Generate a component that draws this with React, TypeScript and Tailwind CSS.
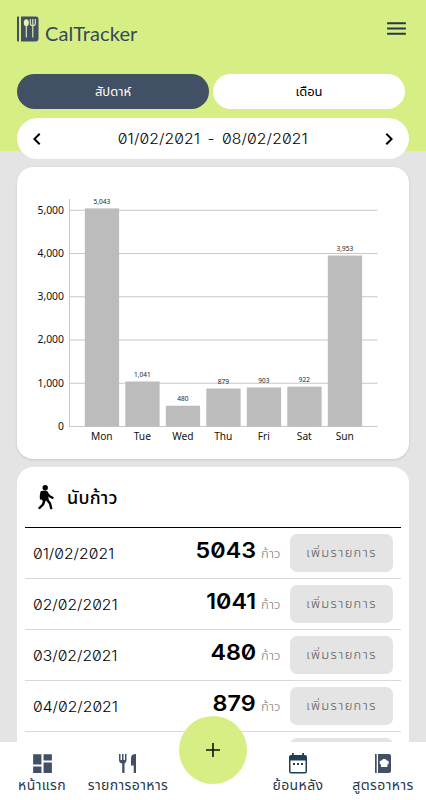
import type { ReactNode } from 'react';
import { MdChevronLeft, MdChevronRight, MdDashboard, MdMenu } from 'react-icons/md';

const days = [
  { day: 'Mon', steps: 5043 },
  { day: 'Tue', steps: 1041 },
  { day: 'Wed', steps: 480 },
  { day: 'Thu', steps: 879 },
  { day: 'Fri', steps: 903 },
  { day: 'Sat', steps: 922 },
  { day: 'Sun', steps: 3953 },
];

const rows = [
  { date: '01/02/2021', steps: 5043 },
  { date: '02/02/2021', steps: 1041 },
  { date: '03/02/2021', steps: 480 },
  { date: '04/02/2021', steps: 879 },
];

function Logo() {
  return (
    <svg width="22" height="26" viewBox="0 0 22 26">
      <path fill="#415064" d="M0 1.500Q0 .5 1 .5H2V25.500H1Q0 25.500 0 24.500ZM4 .5H19Q21.500 .5 21.500 3V22.500Q21.500 25.500 18.500 25.500H4Z" />
      <ellipse cx="9.300" cy="6.800" rx="2.500" ry="3.500" fill="#e6f5b0" />
      <path d="M9.300 8V21.500M15.800 10V21.500M13.300 3V7.500Q13.300 9.700 15.800 9.700Q18.300 9.700 18.300 7.500V3M15.800 3V9" fill="none" stroke="#e6f5b0" strokeWidth="1.100" />
    </svg>
  );
}

function WalkIcon() {
  return (
    <svg width="16" height="25" viewBox="0 0 16 25">
      <circle cx="7.200" cy="2.700" r="2.700" />
      <path d="M3.500 7L7.500 6.500L9.300 7.300L9.700 14.500L5 15Z" stroke="black" strokeWidth="1.800" strokeLinejoin="round" />
      <path d="M3.500 8L3 10.500V13.500M9.500 9L12 11.500L14.500 12.800M6.500 15L5 19.500L1.500 23M9 14.500L12 18.500L13.200 23.200" fill="none" stroke="black" strokeWidth="2.400" strokeLinecap="round" strokeLinejoin="round" />
    </svg>
  );
}

function StepsChart() {
  const y = (v: number) => 259.5 - v * 0.04325;
  return (
    <svg width="392" height="292" viewBox="0 0 392 292" className="block" fontFamily="'Noto Sans', sans-serif">
      {[0, 1000, 2000, 3000, 4000, 5000].map((v) => (
        <g key={v}>
          <path d={`M53 ${y(v)}H360.500`} stroke="#c8c8c8" />
          <text x="47" y={y(v) + 3.3} fontSize="10.400" textAnchor="end" fill="#111">{v.toLocaleString('en-US')}</text>
        </g>
      ))}
      <path d="M52.500 32V260" stroke="#c8c8c8" />
      {days.map((d, i) => {
        const cx = 84.8 + i * 40.5;
        return (
          <g key={d.day}>
            <rect x={cx - 17} y={y(d.steps)} width="34.300" height={y(0) - y(d.steps)} fill="#bcbcbc" />
            <text x={cx} y={y(d.steps) - 4.5} fontSize="6.500" textAnchor="middle" fill="#222">{d.steps.toLocaleString('en-US')}</text>
            <text x={cx} y="273.200" fontSize="10.200" textAnchor="middle" fill="#111">{d.day}</text>
          </g>
        );
      })}
    </svg>
  );
}

function CutleryIcon() {
  return (
    <svg width="18" height="19" viewBox="0 0 18 19">
      <path fill="#415064" d="M0 0H1.500V6H3V0H4.500V6H6V0H7.500V6Q7.500 9 5.500 9.500V19H3.200V9.500Q0 9 0 6ZM17 0V19H14.700V11.500H12V4Q12 0 17 0Z" />
    </svg>
  );
}

function CalendarIcon() {
  return (
    <svg width="20" height="21" viewBox="0 0 20 21">
      <path fill="#233d55" fillRule="evenodd" d="M4 0H5.800V2H14.200V0H16V2H17Q19 2 19 4V18.500Q19 20.500 17 20.500H3Q1 20.500 1 18.500V4Q1 2 3 2H4ZM2.500 7.500V19H17.500V7.500Z" />
      <path fill="#233d55" d="M5 10H7V12H5ZM9 10H11V12H9ZM13 10H15V12H13Z" />
    </svg>
  );
}

function RecipeIcon() {
  return (
    <svg width="16" height="19" viewBox="0 0 16 19">
      <path fill="#415064" d="M0 0H1.700V19H0ZM3 0H14Q16 0 16 2V17Q16 19 14 19H3Z" />
      <path fill="white" d="M6 13V10.600C3.800 9.700 4.200 6.300 6.700 6.600C7.500 4.600 10.900 4.600 11.700 6.600C14.200 6.300 14.600 9.700 12.400 10.600V13Z" />
    </svg>
  );
}

function NavItem({ label, width, children }: { label: string; width: string; children: ReactNode }) {
  return (
    <div className={`flex shrink-0 flex-col items-center ${width}`}>
      <div className="flex h-[22px] items-center justify-center">{children}</div>
      <span className="mt-px text-[14px] leading-5 tracking-[0.4px] whitespace-nowrap text-[#26384e]">{label}</span>
    </div>
  );
}

export default function App() {
  return (
    <div className="relative flex h-[800px] w-[426px] flex-col overflow-hidden bg-[#e4e4e4] font-[Inter,'Noto_Sans_Thai','Noto_Sans',sans-serif] text-black">
      <main className="min-h-0 flex-1 overflow-hidden bg-[linear-gradient(#d6ee83_151px,#e4e4e4_151px)]">
        <header className="flex h-[74px] items-start justify-between pt-4 pr-[17px] pl-[17px]">
          <div className="flex items-start gap-[6px]">
            <Logo />
            <h1 className="pt-[5px] font-[Lato,sans-serif] text-[20px] leading-6 tracking-[0.1px] text-[#35495b]">CalTracker</h1>
          </div>
          <MdMenu size={25} className="text-[#26384e]" />
        </header>
        <div className="flex gap-1 pl-[17px] text-[13px]">
          <button className="h-[35px] w-[192px] rounded-full bg-[#415064] text-white">สัปดาห์</button>
          <button className="h-[35px] w-[192px] rounded-full bg-white">เดือน</button>
        </div>
        <div className="mx-[17px] mt-[9px] flex h-[41px] w-[392px] items-center justify-between rounded-full bg-white px-2">
          <MdChevronLeft size={24} />
          <span className="scale-x-[1.12] text-[14px] font-light tracking-[0.1px] [font-feature-settings:'zero'] [word-spacing:2.500px]">01/02/2021 - 08/02/2021</span>
          <MdChevronRight size={24} />
        </div>
        <section className="mx-[17px] mt-2 h-[292px] w-[392px] rounded-[16px] bg-white shadow-sm">
          <StepsChart />
        </section>
        <section className="mx-[17px] mt-2 h-[333px] w-[392px] rounded-t-[16px] bg-white px-2">
          <div className="flex h-[61px] items-center border-b border-black pl-[13px]">
            <WalkIcon />
            <h2 className="ml-[13px] text-[18px] font-medium tracking-[0.2px]">นับก้าว</h2>
          </div>
          {rows.map((r) => (
            <div key={r.date} className="flex h-[51px] items-center border-b border-[#d9d9d9] pr-2 pl-2">
              <span className="origin-left scale-x-[1.12] text-[14px] font-light [font-feature-settings:'zero']">{r.date}</span>
              <div className="-mt-[7px] ml-auto flex items-baseline gap-[5px]">
                <b className="origin-right scale-x-[1.06] text-[22px] leading-8 font-semibold [font-feature-settings:'zero']">{r.steps}</b>
                <span className="w-[20px] text-[13px] font-light whitespace-nowrap text-[#777]">ก้าว</span>
              </div>
              <button className="ml-[9px] h-[38px] w-[103px] rounded-[7px] bg-[#e4e4e4] text-[13px] font-light tracking-[1.300px] text-[#555]">เพิ่มรายการ</button>
            </div>
          ))}
          <div className="mt-[6px] mr-2 ml-auto h-[38px] w-[103px] rounded-[7px] bg-[#e4e4e4]" />
        </section>
      </main>
      <nav className="flex h-[58px] shrink-0 bg-white pt-[10px]">
        <NavItem label="หน้าแรก" width="w-[84px]"><MdDashboard size={25} className="text-[#415064]" /></NavItem>
        <NavItem label="รายการอาหาร" width="w-[88px]"><CutleryIcon /></NavItem>
        <div className="w-[82px] shrink-0" />
        <NavItem label="ย้อนหลัง" width="w-[88px]"><CalendarIcon /></NavItem>
        <NavItem label="สูตรอาหาร" width="w-[82px]"><RecipeIcon /></NavItem>
      </nav>
      <button aria-label="Add" className="absolute top-[716px] left-[179px] flex size-[68px] items-center justify-center rounded-full bg-[#d6ee83]">
        <svg width="16" height="16" viewBox="0 0 16 16"><path d="M8 1V15M1 8H15" stroke="#111" strokeWidth="1.600" /></svg>
      </button>
    </div>
  );
}
